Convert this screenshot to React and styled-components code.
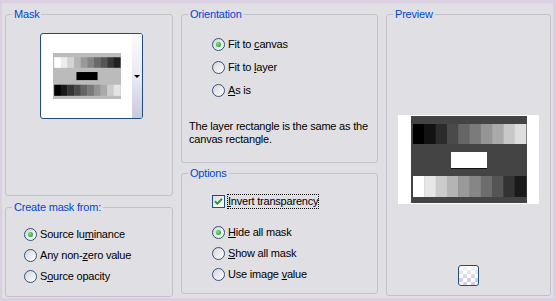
import React from "react";
import styled, { createGlobalStyle } from "styled-components";

const GlobalStyle = createGlobalStyle`
  html, body {
    margin: 0;
    padding: 0;
    background: #e0dfe3;
  }
`;

const Page = styled.div`
  box-sizing: border-box;
  width: 556px;
  height: 301px;
  display: flex;
  align-items: flex-start;
  gap: 8px;
  padding: 5px 0 0 3px;
  background: #e0dfe3;
  border-style: solid;
  border-color: #dad0e2;
  border-width: 3px 3px 3px 2px;
  font-family: "Liberation Sans", Arial, sans-serif;
  font-size: 11px;
  letter-spacing: -0.2px;
  color: #000;
`;

const Column = styled.div`
  display: flex;
  flex-direction: column;
  width: ${(p) => p.$width}px;
  gap: ${(p) => p.$gap}px;
`;

const Group = styled.fieldset`
  box-sizing: border-box;
  margin: 0;
  padding: 0 6px 0 6px;
  min-width: 0;
  width: 100%;
  height: ${(p) => p.$height}px;
  border: 1px solid #c3c2ca;
  border-radius: 3px;
  display: flex;
  flex-direction: column;
  align-items: ${(p) => p.$align || "flex-start"};
`;

const Legend = styled.legend`
  padding: 0 2px;
  color: #0046d5;
  font-size: 11px;
  line-height: 12px;
`;

const ThumbButton = styled.div`
  box-sizing: border-box;
  margin: 13px 0 0 28px;
  width: 103px;
  height: 86px;
  display: flex;
  border: 1px solid #1f4e7d;
  border-radius: 3px;
  background: #fff;
  overflow: hidden;
`;

const ThumbArea = styled.div`
  flex: 1;
  display: flex;
  align-items: center;
  justify-content: center;
`;

const DropStrip = styled.div`
  width: 10px;
  display: flex;
  align-items: center;
  justify-content: center;
  background: linear-gradient(to bottom, #fbfbfd 0%, #e8e8f2 55%, #c9c9df 100%);
`;

const Arrow = styled.span`
  width: 0;
  height: 0;
  border-left: 3px solid transparent;
  border-right: 3px solid transparent;
  border-top: 3px solid #000;
`;

const Options = styled.div`
  display: flex;
  flex-direction: column;
  margin: ${(p) => p.$margin};
`;

const Row = styled.label`
  display: flex;
  align-items: center;
  height: ${(p) => p.$height || 21}px;
  line-height: 13px;
  white-space: nowrap;
`;

const Radio = styled.span`
  box-sizing: border-box;
  position: relative;
  width: 13px;
  height: 13px;
  margin-right: 3px;
  flex: none;
  border-radius: 50%;
  border: 1px solid #35507a;
  background: linear-gradient(135deg, #d2d2da 0%, #ececf0 55%, #ffffff 100%);

  &::after {
    content: "";
    display: ${(p) => (p.$checked ? "block" : "none")};
    position: absolute;
    left: 3px;
    top: 3px;
    width: 5px;
    height: 5px;
    border-radius: 50%;
    background: radial-gradient(circle at 40% 40%, #9be59b 0%, #3cbf3c 45%, #1f9a1f 100%);
  }
`;

const CheckBox = styled.span`
  box-sizing: border-box;
  width: 13px;
  height: 13px;
  margin-right: 2px;
  flex: none;
  display: flex;
  align-items: center;
  justify-content: center;
  border: 1px solid #1c5180;
  background: linear-gradient(135deg, #d8d8e0 0%, #f4f4f6 60%, #ffffff 100%);
`;

const Focus = styled.span`
  padding: 1px 1px;
  outline: 1px dotted #000;
  outline-offset: -1px;
`;

const Note = styled.p`
  margin: ${(p) => p.$margin};
  line-height: 13px;
`;

const Frame = styled.div`
  margin-top: 95px;
  width: 141px;
  height: 89px;
  box-sizing: border-box;
  padding: 1px 12px 1px 13px;
  background: #fff;
  display: flex;
`;

const SmallButton = styled.div`
  box-sizing: border-box;
  margin-top: 61px;
  width: 21px;
  height: 21px;
  border: 1px solid #1f4e7d;
  border-radius: 3px;
  background:
    linear-gradient(to bottom, rgba(255, 255, 255, 0.85), rgba(255, 255, 255, 0) 70%),
    conic-gradient(#cfcfe8 25%, #ffffff 0 50%, #cfcfe8 0 75%, #ffffff 0) 0 0 / 8px 8px;
`;

const topRow = ["#000", "#121212", "#2b2b2b", "#4a4a4a", "#666", "#7b7b7b", "#959595", "#aaa", "#c8c8c8", "#dedede"];
const bottomRow = ["#fff", "#e6e6e6", "#cbcbcb", "#b4b4b4", "#9a9a9a", "#868686", "#6c6c6c", "#555", "#333", "#1a1a1a"];

function MaskPicture({ width, height, invert }) {
  const cell = 113 / 10;
  return (
    <svg
      width={width}
      height={height}
      viewBox="0 0 116 87"
      preserveAspectRatio="none"
      style={invert ? { filter: "invert(1)" } : undefined}
    >
      <rect x="0" y="0" width="116" height="87" fill="#444" />
      {topRow.map((c, i) => (
        <rect key={"t" + i} x={2 + i * cell} y="8" width={cell + 0.4} height="20" fill={c} />
      ))}
      <rect x="40" y="36" width="36" height="16" fill="#fff" />
      <rect x="40" y="52" width="36" height="1" fill="#111" />
      {bottomRow.map((c, i) => (
        <rect key={"b" + i} x={2 + i * cell} y="60" width={cell + 0.4} height="21" fill={c} />
      ))}
    </svg>
  );
}

function Check() {
  return (
    <svg width="9" height="9" viewBox="0 0 9 9">
      <path d="M1 4.2 L3.4 6.6 L8 1.8" fill="none" stroke="#21a121" strokeWidth="2" />
    </svg>
  );
}

function Choice({ checked, height, children }) {
  return (
    <Row $height={height}>
      <Radio $checked={checked} />
      <span>{children}</span>
    </Row>
  );
}

export default function App() {
  return (
    <>
      <GlobalStyle />
      <Page>
        <Column $width={168} $gap={5}>
          <Group $height={188}>
            <Legend>Mask</Legend>
            <ThumbButton>
              <ThumbArea>
                <MaskPicture width={68} height={46} invert />
              </ThumbArea>
              <DropStrip>
                <Arrow />
              </DropStrip>
            </ThumbButton>
          </Group>
          <Group $height={96}>
            <Legend>Create mask from:</Legend>
            <Options $margin="11px 0 0 12px">
              <Choice checked>Source lu<u>m</u>inance</Choice>
              <Choice>Any non-<u>z</u>ero value</Choice>
              <Choice>S<u>o</u>urce opacity</Choice>
            </Options>
          </Group>
        </Column>

        <Column $width={197} $gap={4}>
          <Group $height={155}>
            <Legend>Orientation</Legend>
            <Options $margin="13px 0 0 24px">
              <Choice checked height={23}>Fit to <u>c</u>anvas</Choice>
              <Choice height={23}>Fit to <u>l</u>ayer</Choice>
              <Choice height={23}><u>A</u>s is</Choice>
            </Options>
            <Note $margin="18px 0 0 1px">
              The layer rectangle is the same as the
              <br />
              canvas rectangle.
            </Note>
          </Group>
          <Group $height={127}>
            <Legend>Options</Legend>
            <Options $margin="11px 0 0 24px">
              <Row $height={22}>
                <CheckBox>
                  <Check />
                </CheckBox>
                <Focus>
                  <u>I</u>nvert transparency
                </Focus>
              </Row>
              <Options $margin="10px 0 0 0">
                <Choice checked><u>H</u>ide all mask</Choice>
                <Choice><u>S</u>how all mask</Choice>
                <Choice>Use image <u>v</u>alue</Choice>
              </Options>
            </Options>
          </Group>
        </Column>

        <Column $width={165} $gap={0}>
          <Group $height={288} $align="center">
            <Legend>Preview</Legend>
            <Frame>
              <MaskPicture width={116} height={87} />
            </Frame>
            <SmallButton />
          </Group>
        </Column>
      </Page>
    </>
  );
}
